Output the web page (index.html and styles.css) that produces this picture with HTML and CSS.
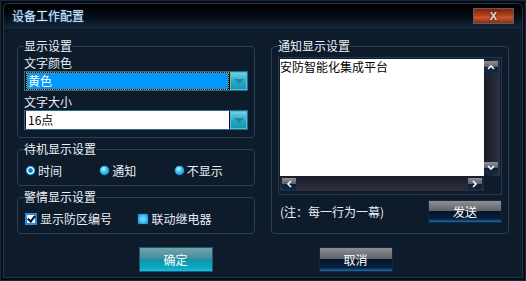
FILE: index.html
```html
<!DOCTYPE html>
<html lang="zh-CN">
<head>
    <meta charset="UTF-8">
    <meta name="viewport" content="width=device-width, initial-scale=1.0">
    <title>设备工作配置</title>
    <link rel="stylesheet" href="styles.css">
</head>
<body>
<div class="window">
    <div class="frame">
        <div class="titlebar">
            <span class="title">设备工作配置</span>
            <button class="close-btn">X</button>
        </div>
        <div class="content">
            <div class="columns">
                <div class="col-left">
                    <fieldset class="group group-display">
                        <legend>显示设置</legend>
                        <div class="field-label">文字颜色</div>
                        <div class="combo">
                            <div class="combo-value selected">黄色</div>
                            <div class="combo-arrow"></div>
                        </div>
                        <div class="field-label">文字大小</div>
                        <div class="combo">
                            <div class="combo-value">16点</div>
                            <div class="combo-arrow"></div>
                        </div>
                    </fieldset>
                    <fieldset class="group group-standby">
                        <legend>待机显示设置</legend>
                        <div class="option-row">
                            <label class="option radio-opt"><span class="radio checked"></span>时间</label>
                            <label class="option radio-opt"><span class="radio"></span>通知</label>
                            <label class="option radio-opt"><span class="radio"></span>不显示</label>
                        </div>
                    </fieldset>
                    <fieldset class="group group-alarm">
                        <legend>警情显示设置</legend>
                        <div class="option-row">
                            <label class="option check-opt"><span class="checkbox checked"></span>显示防区编号</label>
                            <label class="option check-opt"><span class="checkbox"></span>联动继电器</label>
                        </div>
                    </fieldset>
                </div>
                <div class="col-right">
                    <fieldset class="group group-notice">
                        <legend>通知显示设置</legend>
                        <div class="textbox">
                            <div class="text-area">安防智能化集成平台</div>
                            <div class="vscroll">
                                <span class="sb-btn"><svg width="8" height="6" viewBox="0 0 8 6"><path d="M1 5 L4 2 L7 5" fill="none" stroke="#fff" stroke-width="1.6"/></svg></span>
                                <span class="sb-btn"><svg width="8" height="6" viewBox="0 0 8 6"><path d="M1 1 L4 4 L7 1" fill="none" stroke="#fff" stroke-width="1.6"/></svg></span>
                            </div>
                            <div class="hscroll">
                                <span class="sb-btn"><svg width="6" height="8" viewBox="0 0 6 8"><path d="M5 1 L2 4 L5 7" fill="none" stroke="#fff" stroke-width="1.6"/></svg></span>
                                <span class="sb-btn"><svg width="6" height="8" viewBox="0 0 6 8"><path d="M1 1 L4 4 L1 7" fill="none" stroke="#fff" stroke-width="1.6"/></svg></span>
                            </div>
                            <div class="corner"></div>
                        </div>
                        <div class="notice-row">
                            <span class="hint">(注：每一行为一幕)</span>
                            <button class="btn btn-dark">发送</button>
                        </div>
                    </fieldset>
                </div>
            </div>
            <div class="actions">
                <button class="btn btn-ok">确定</button>
                <button class="btn btn-dark">取消</button>
            </div>
        </div>
    </div>
</div>
</body>
</html>
```

FILE: styles.css
```css
* {
    box-sizing: border-box;
}
body {
    margin: 0;
    background: #070e17;
    font-family: "Noto Sans CJK SC", "Liberation Sans", sans-serif;
    font-size: 12px;
    color: #e8eef4;
}
.window {
    width: 526px;
    height: 281px;
    padding: 2px;
    border: 1px solid #1a2838;
    background: #060c14;
}
.frame {
    height: 100%;
    display: flex;
    flex-direction: column;
    border: 1px solid #23364b;
    border-radius: 6px 6px 0 0;
    background: #0d1b2b;
    overflow: hidden;
}
.titlebar {
    height: 26px;
    flex: none;
    display: flex;
    align-items: center;
    justify-content: space-between;
    padding: 0 8px 2px 8px;
    background: linear-gradient(#000 0, #02060b 35%, #0f2032 85%, #14283c 100%);
    border-bottom: 1px solid #0a1420;
}
.title {
    color: #d6ecfa;
    font-size: 12px;
    line-height: 14px;
    text-shadow: 0 0 2px #3a8ad0;
}
.close-btn {
    width: 41px;
    height: 16px;
    padding: 0;
    border: 1px solid #6a5a58;
    background: linear-gradient(#7a2410 0, #b2401a 45%, #c8562c 60%, #8a2c14 100%);
    color: #e4e0de;
    font-family: "Liberation Sans", sans-serif;
    font-weight: bold;
    font-size: 11px;
    line-height: 12px;
    text-shadow: 0 0 2px #000;
}
.content {
    flex: 1;
    padding: 10px 12px 0 13px;
}
.columns {
    display: flex;
    gap: 16px;
}
.col-left,
.col-right {
    width: 238px;
    display: flex;
    flex-direction: column;
}
.col-left {
    gap: 5px;
}
.group {
    margin: 0;
    padding: 0 6px 6px 6px;
    border: 1px solid #2a4259;
    border-radius: 4px;
    min-width: 0;
}
.group-display {
    padding-bottom: 7px;
}
.group legend {
    padding: 0;
    line-height: 12px;
    font-size: 12px;
    color: #eef3f8;
}
.field-label {
    height: 16px;
    line-height: 16px;
    margin-top: 3px;
}
.combo {
    display: flex;
    height: 20px;
    border: 1px solid #2a6a8a;
    background: #06121e;
    padding: 0 0 0 1px;
}
.combo-value {
    flex: 1;
    background: #fff;
    color: #000;
    line-height: 18px;
    padding-left: 2px;
    margin-right: 1px;
}
.combo-value.selected {
    background: #0099ff;
    background-clip: padding-box;
    border: 1px dotted #f08a00;
    color: #fff;
    line-height: 16px;
    padding-left: 1px;
}
.combo-arrow {
    width: 17px;
    height: 18px;
    background: linear-gradient(#6fd2e2, #2aaac4 50%, #1796b2);
    border: 1px solid #4cc0d8;
    position: relative;
}
.combo-arrow::after {
    content: "";
    position: absolute;
    left: 3px;
    top: 6px;
    border-left: 5px solid transparent;
    border-right: 5px solid transparent;
    border-top: 5px solid #1a8aa8;
}
.option-row {
    display: flex;
    height: 17px;
    margin-top: 7px;
    padding-left: 1px;
}
.option {
    display: flex;
    align-items: center;
    line-height: 16px;
}
.radio-opt {
    width: 76px;
}
.check-opt {
    width: 120px;
}
.radio {
    width: 11px;
    height: 11px;
    margin-right: 2px;
    border-radius: 50%;
    border: 1px solid #0a3050;
    background: radial-gradient(circle at 40% 35%, #c8f4ff 0, #3cc4f2 40%, #0a7ec4 100%);
}
.radio.checked {
    background: radial-gradient(circle, #1a78c8 0, #1a78c8 2px, #ffffff 2.6px, #ffffff 3.2px, #2ab2f0 3.8px, #0a78c0 100%);
}
.checkbox {
    width: 12px;
    height: 12px;
    margin-right: 3px;
    border: 1px solid #0a2a48;
    background: radial-gradient(circle, #8ee0ff 0, #3cb8f0 55%, #0c78c0 100%);
    position: relative;
}
.checkbox.checked {
    border: 2px solid #2a8ae0;
    background: #f4f8fc;
}
.checkbox.checked::after {
    content: "";
    position: absolute;
    left: 2px;
    top: -1px;
    width: 3px;
    height: 6px;
    border-right: 2px solid #001020;
    border-bottom: 2px solid #001020;
    transform: rotate(40deg);
}
.group-notice {
    flex: 1;
    display: flex;
    flex-direction: column;
    padding-bottom: 5px;
}
.textbox {
    margin-top: 5px;
    height: 138px;
    border: 1px solid #1f3a56;
    padding: 1px;
    display: grid;
    grid-template-columns: 1fr 16px;
    grid-template-rows: 1fr 17px;
}
.text-area {
    background: #fff;
    color: #000;
    line-height: 14px;
    padding: 1px 0 0 0;
}
.vscroll {
    display: flex;
    flex-direction: column;
    justify-content: space-between;
    padding: 2px 2px 2px 0;
    background: linear-gradient(90deg, #191a28, #2f3040);
}
.hscroll {
    display: flex;
    justify-content: space-between;
    padding: 2px 2px 2px 2px;
    margin-bottom: 2px;
    background: linear-gradient(#1c1d2b, #2e2f3f);
}
.sb-btn {
    width: 14px;
    height: 12px;
    display: flex;
    align-items: center;
    justify-content: center;
    background: linear-gradient(#8e9094, #5a5e66 50%, #0c1e36 50%, #0e2c4a);
}
.corner {
    background: #0d1b2b;
}
.notice-row {
    display: flex;
    justify-content: space-between;
    align-items: center;
    margin-top: 5px;
}
.hint {
    padding-left: 2px;
}
.btn {
    width: 74px;
    height: 23px;
    padding: 0;
    font-family: "Noto Sans CJK SC", sans-serif;
    font-size: 12px;
    color: #fff;
    border: 1px solid #14283e;
}
.btn-dark {
    background: linear-gradient(#8e8f92 0, #5c6068 50%, #071428 50%, #08203c 85%, #1a6cb0 100%);
}
.btn-ok {
    border-color: #1a5a72;
    background: linear-gradient(#72a4ac 0, #3e8c9a 50%, #0c94b0 50%, #10a8c4 85%, #14c0dc 100%);
}
.actions {
    display: flex;
    justify-content: center;
    gap: 106px;
    margin-top: 13px;
    padding-left: 4px;
}
.actions .btn {
    height: 25px;
}
```
